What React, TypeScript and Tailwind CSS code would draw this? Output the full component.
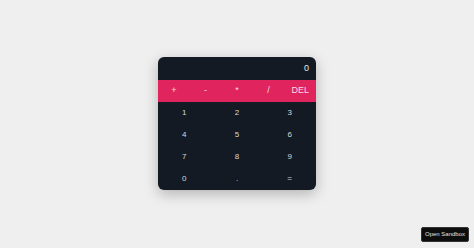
import React from "react";

export default function App() {
  const ops = ["+", "-", "*", "/", "DEL"];
  const digits = ["1", "2", "3", "4", "5", "6", "7", "8", "9", "0", ".", "="];
  return (
    <div
      className="w-[474px] h-[248px] bg-[#efefef] relative flex justify-center antialiased"
      style={{ fontFamily: "'Liberation Sans', Arial, sans-serif" }}
    >
      <div className="mt-[57px] w-[158px] h-[133px] bg-[#141a24] rounded-[6px] overflow-hidden shadow-[0_4px_14px_rgba(0,0,0,0.25)] flex flex-col">
        <div className="h-[23px] flex items-center justify-end pr-[7px] text-[9px] text-[#e6e6e6]">
          0
        </div>
        <div className="h-[22px] bg-[#e0245e] grid grid-cols-5 text-[9px] text-[#fadbe4]">
          {ops.map((o) => (
            <div key={o} className="flex items-center justify-center">
              {o}
            </div>
          ))}
        </div>
        <div className="flex-1 grid grid-cols-3 grid-rows-4 text-[8px] text-[#d8d8d8]">
          {digits.map((d) => (
            <div key={d} className="flex items-center justify-center">
              {d}
            </div>
          ))}
        </div>
      </div>
      <div className="absolute right-[5px] bottom-[6px] w-[48px] h-[15px] bg-[#0d0d0d] rounded-[2px] border border-[#333] flex items-center justify-center text-[6px] text-[#e0e0e0]">
        Open Sandbox
      </div>
    </div>
  );
}
